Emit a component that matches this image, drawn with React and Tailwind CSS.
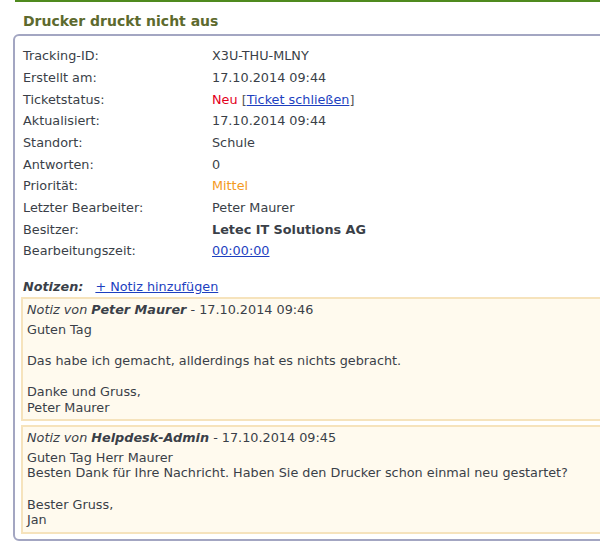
import React from 'react';

const rows = [
  { label: 'Tracking-ID:', value: 'X3U-THU-MLNY' },
  { label: 'Erstellt am:', value: '17.10.2014 09:44' },
  { label: 'Ticketstatus:', value: 'status' },
  { label: 'Aktualisiert:', value: '17.10.2014 09:44' },
  { label: 'Standort:', value: 'Schule' },
  { label: 'Antworten:', value: '0' },
  { label: 'Priorität:', value: 'prio' },
  { label: 'Letzter Bearbeiter:', value: 'Peter Maurer' },
  { label: 'Besitzer:', value: 'owner' },
  { label: 'Bearbeitungszeit:', value: 'time' },
];

const renderValue = (v) => {
  if (v === 'status')
    return (
      <span>
        <span className="text-[#e3001b]">Neu</span>{' '}
        <span className="text-[#555]">[</span>
        <a href="#" className="text-[#1d3fbf] underline">Ticket schließen</a>
        <span className="text-[#555]">]</span>
      </span>
    );
  if (v === 'prio') return <span className="text-[#f39a1e]">Mittel</span>;
  if (v === 'owner') return <span className="font-bold">Letec IT Solutions AG</span>;
  if (v === 'time') return <a href="#" className="text-[#1d3fbf] underline">00:00:00</a>;
  return v;
};

const notes = [
  {
    author: 'Peter Maurer',
    date: '17.10.2014 09:46',
    lines: ['Guten Tag', '', 'Das habe ich gemacht, allderdings hat es nichts gebracht.', '', 'Danke und Gruss,', 'Peter Maurer'],
  },
  {
    author: 'Helpdesk-Admin',
    date: '17.10.2014 09:45',
    lines: ['Guten Tag Herr Maurer', 'Besten Dank für Ihre Nachricht. Haben Sie den Drucker schon einmal neu gestartet?', '', 'Bester Gruss,', 'Jan'],
  },
];

const App = () => {
  return (
    <div className="w-[600px] h-[551px] overflow-hidden bg-white text-[12.8px] text-[#3a3f48]" style={{ fontFamily: '"DejaVu Sans", Verdana, sans-serif' }}>
      <div className="w-[700px] pl-[15px]">
        <div className="h-[2px] bg-[#4f8a1e]"></div>
        <h2 className="pl-[8px] pt-[10px] text-[14px] font-bold text-[#5d6a2e] leading-[18px]">Drucker druckt nicht aus</h2>
      </div>
      <div className="w-[700px] ml-[13px] mt-[4px] border-2 border-[#a3a6c2] rounded-[6px] pt-[9px] pb-[5px] pl-[8px]">
        <div className="flex flex-col">
          {rows.map((r) => (
            <div key={r.label} className="flex h-[21.7px] items-center">
              <div className="w-[189px]">{r.label}</div>
              <div>{renderValue(r.value)}</div>
            </div>
          ))}
        </div>
        <div className="mt-[15px] flex items-center gap-[12px]">
          <span className="font-bold italic">Notizen:</span>
          <a href="#" className="text-[#1d3fbf] underline">+ Notiz hinzufügen</a>
        </div>
        <div className="mt-[1px] -ml-[2px] flex flex-col gap-[4px]">
          {notes.map((n) => (
            <div key={n.author} className="border-2 border-[#f6e3bc] bg-[#fffaee] pl-[4px] pt-[3px] pb-[4px] leading-[15.6px]">
              <div className="mb-[4px]">
                <span className="italic">Notiz von </span>
                <span className="italic font-bold">{n.author}</span>
                <span> - {n.date}</span>
              </div>
              {n.lines.map((l, i) => (
                <div key={i} className="h-[15.6px]">{l}</div>
              ))}
            </div>
          ))}
        </div>
      </div>
    </div>
  );
};

export default App;
